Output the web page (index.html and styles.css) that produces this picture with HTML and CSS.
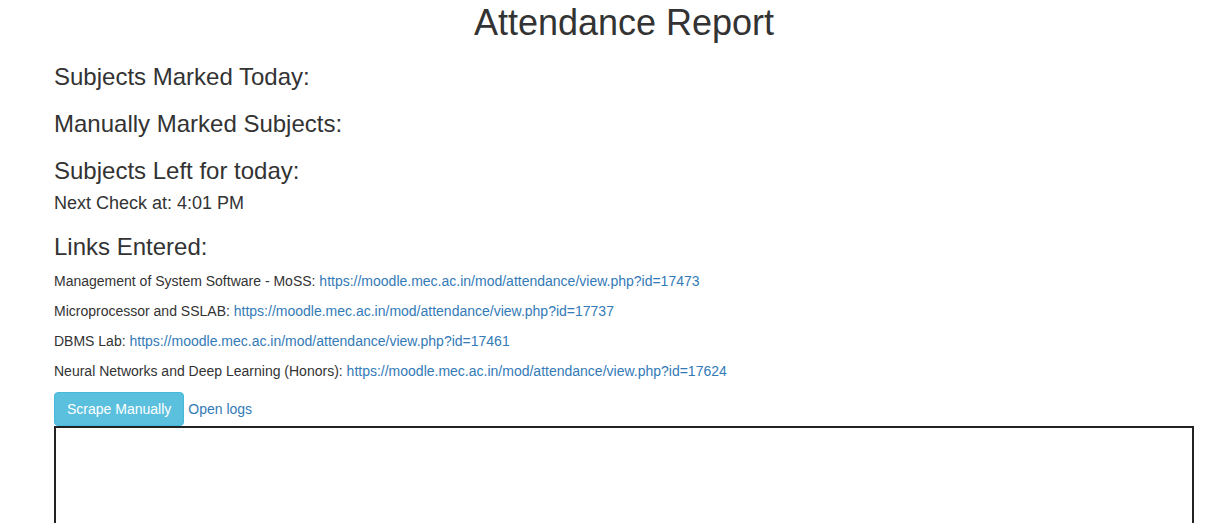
FILE: index.html
```html
<!DOCTYPE html>
<html lang="en">
<head>
<meta charset="utf-8">
<title>Attendance Report</title>
<link rel="stylesheet" href="styles.css">
</head>
<body>
<div class="container">
  <h1 class="title">Attendance Report</h1>
  <h3 class="section">Subjects Marked Today:</h3>
  <h3 class="section">Manually Marked Subjects:</h3>
  <h3 class="section">Subjects Left for today:</h3>
  <h4 class="next">Next Check at: 4:01 PM</h4>
  <h3 class="section">Links Entered:</h3>
  <div class="links">
    <p>Management of System Software - MoSS: <a href="#">https://moodle.mec.ac.in/mod/attendance/view.php?id=17473</a></p>
    <p>Microprocessor and SSLAB: <a href="#">https://moodle.mec.ac.in/mod/attendance/view.php?id=17737</a></p>
    <p>DBMS Lab: <a href="#">https://moodle.mec.ac.in/mod/attendance/view.php?id=17461</a></p>
    <p>Neural Networks and Deep Learning (Honors): <a href="#">https://moodle.mec.ac.in/mod/attendance/view.php?id=17624</a></p>
  </div>
  <div class="actions">
    <button class="btn-info" type="button">Scrape Manually</button>
    <a href="#" class="logs">Open logs</a>
  </div>
  <div class="logbox"></div>
</div>
</body>
</html>
```
FILE: styles.css
```css
html, body {
  margin: 0;
  padding: 0;
  background: #fff;
  overflow: hidden;
}
body {
  font-family: "Liberation Sans", Arial, sans-serif;
  font-size: 14px;
  line-height: 1.42857143;
  color: #333;
}
.container {
  width: 1140px;
  margin-left: 54px;
  padding-top: 3px;
}
.title {
  font-size: 36px;
  font-weight: 400;
  line-height: 1.1;
  margin: 0 0 10px;
  text-align: center;
}
.section {
  font-size: 24px;
  font-weight: 400;
  line-height: 27px;
  margin: 20px 0 10px;
}
.next {
  font-size: 18px;
  font-weight: 400;
  line-height: 1.1;
  margin: 10px 0 10px;
}
.links {
  padding-top: 1px;
}
.links p {
  margin: 0 0 10px;
}
a {
  color: #337ab7;
  text-decoration: none;
}
.actions {
  display: flex;
  align-items: center;
  gap: 4px;
  padding-top: 1px;
}
.btn-info {
  font-family: inherit;
  font-size: 14px;
  line-height: 1.42857143;
  padding: 6px 12px;
  color: #fff;
  background: #5bc0de;
  border: 1px solid #46b8da;
  border-radius: 4px;
  cursor: pointer;
}
.logbox {
  border: 2px solid #222;
  height: 300px;
  box-sizing: border-box;
}
```
